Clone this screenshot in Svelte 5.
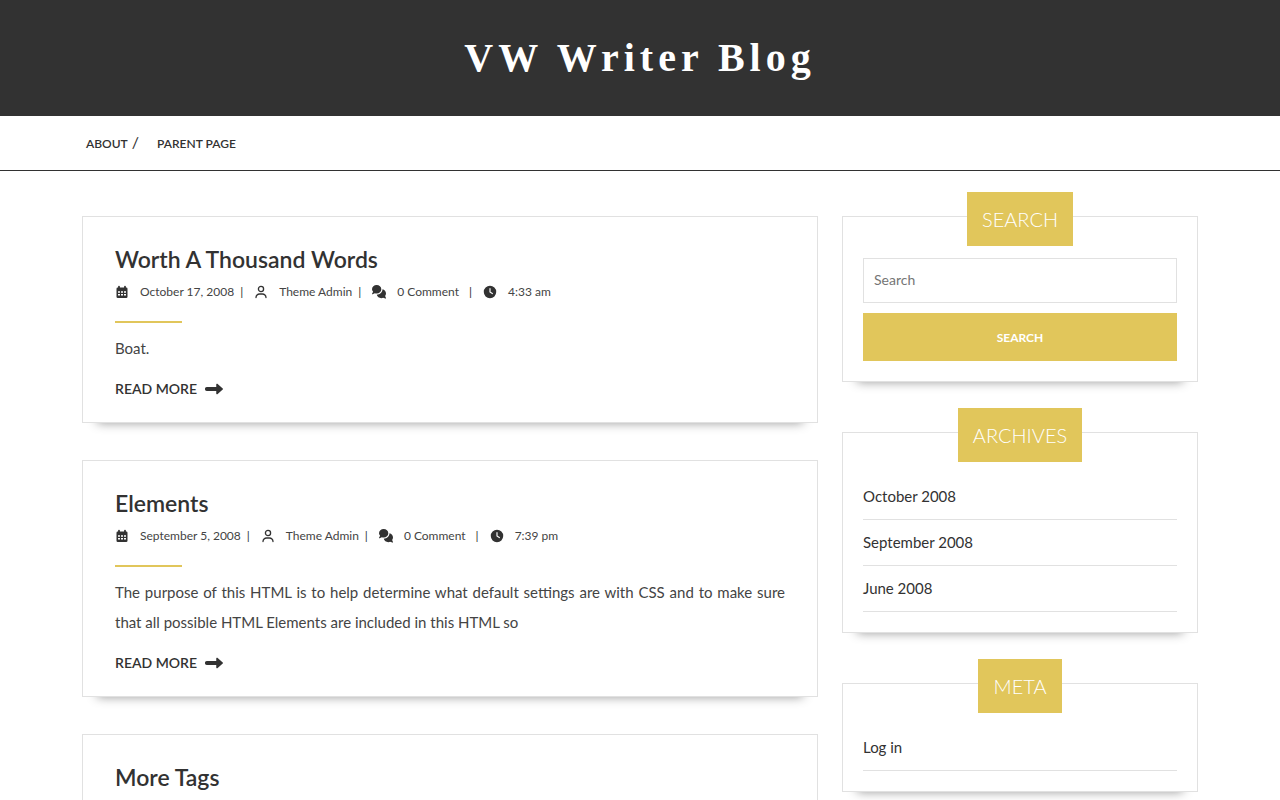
<script>
  const pages = ['About', 'Parent Page'];
  const posts = [
    { title: 'Worth A Thousand Words', date: 'October 17, 2008', time: '4:33 am', text: 'Boat.' },
    {
      title: 'Elements',
      date: 'September 5, 2008',
      time: '7:39 pm',
      text: 'The purpose of this HTML is to help determine what default settings are with CSS and to make sure that all possible HTML Elements are included in this HTML so'
    },
    { title: 'More Tags', date: '', time: '', text: '' }
  ];
  const lists = [
    { title: 'Archives', items: ['October 2008', 'September 2008', 'June 2008'] },
    { title: 'Meta', items: ['Log in'] }
  ];
</script>

<header>
  <h1><a href="#home">VW Writer Blog</a></h1>
</header>

<nav aria-label="Pages">
  <ul class="container menu">
    {#each pages as page}
      <li><a href="#page">{page}</a></li>
    {/each}
  </ul>
</nav>

<div class="container columns">
  <main>
    {#each posts as post}
      <article class="card">
        <h2><a href="#post">{post.title}</a></h2>
        {#if post.text}
          <div class="meta">
            <span class="item">
              <svg viewBox="0 0 14 14" aria-hidden="true">
                <path fill-rule="evenodd" d="M4 .8a.9.9 0 0 1 .9.9V2.400h4.200V1.700a.9.9 0 0 1 1.800 0v.7h.3A1.300 1.300 0 0 1 12.500 3.700v8A1.300 1.300 0 0 1 11.200 13H2.800A1.300 1.300 0 0 1 1.500 11.700V3.700A1.300 1.300 0 0 1 2.800 2.400H3.100V1.700A.9.9 0 0 1 4 .8zM3 6.200v1.600h2V6.200zM6 6.200v1.600h2V6.200zM9 6.200v1.600h2V6.200zM3 9v1.600h2V9zM6 9v1.600h2V9zM9 9v1.600h2V9z" />
              </svg>
              <a href="#date">{post.date}</a>
            </span>
            <span class="bar">|</span>
            <span class="item">
              <svg viewBox="0 0 14 14" aria-hidden="true">
                <g fill="none" stroke="currentColor" stroke-width="1.3" stroke-linecap="round">
                  <circle cx="7" cy="4" r="2.6" />
                  <path d="M2 12.600A3.600 3.600 0 0 1 5.600 9H8.400A3.600 3.600 0 0 1 12 12.600" />
                </g>
              </svg>
              <a href="#author">Theme Admin</a>
            </span>
            <span class="bar">|</span>
            <span class="item">
              <svg viewBox="0 0 576 512" aria-hidden="true">
                <path d="M384 144c0 97-86 176-192 176-27 0-52-5-75-14L25 351c-8 4-17 2-22-4s-6-15-2-23l45-80C17 216 0 182 0 144 0 47 86-32 192-32s192 79 192 176zM384 512c-93 0-170-60-188-139C326 371 431 270 432 147 514 167 576 237 576 320c0 38-13 73-36 101l35 80c3 8 2 17-4 23s-15 8-22 4l-91-31c-23 10-48 15-74 15z" />
              </svg>
              <span>0 Comment</span>
            </span>
            <span class="bar wide">|</span>
            <span class="item">
              <svg viewBox="0 0 576 576" aria-hidden="true">
                <path transform="translate(32 32)" fill-rule="evenodd" d="M256 0a256 256 0 1 1 0 512A256 256 0 1 1 256 0zM232 120V256c0 8 4 15.500 10.700 20l96 64c11 7.400 25.900 4.400 33.300-6.700s4.400-25.900-6.700-33.300L280 243.200V120c0-13.300-10.700-24-24-24s-24 10.700-24 24z" />
              </svg>
              <span>{post.time}</span>
            </span>
          </div>
          <hr />
          <p>{post.text}</p>
          <a class="more" href="#post">
            Read More
            <svg viewBox="0 96 512 320" aria-hidden="true">
              <path d="M334.500 404c8.800 3.800 19 2 26-4.600l144-126c4.800-4.500 7.500-10.800 7.500-17.400s-2.700-12.900-7.500-17.400l-144-126c-7-6.600-17.200-8.400-26-4.600s-14.500 12.500-14.500 22v68H50c-28 0-50 20-50 48v20c0 28 22 48 50 48h270v68c0 9.600 5.700 18.200 14.500 22z" />
            </svg>
          </a>
        {/if}
      </article>
    {/each}
  </main>

  <aside>
    <section class="card widget">
      <h3>Search</h3>
      <form role="search">
        <input type="search" aria-label="Search" placeholder="Search" />
        <button type="submit">Search</button>
      </form>
    </section>
    {#each lists as list}
      <section class="card widget">
        <h3>{list.title}</h3>
        <ul>
          {#each list.items as item}
            <li><a href="#list">{item}</a></li>
          {/each}
        </ul>
      </section>
    {/each}
  </aside>
</div>

<style>
  :global(body) {
    font-family: Lato, sans-serif;
    font-size: 15px;
    color: #323232;
    background: #fff;
  }
  :global(*) {
    box-sizing: border-box;
  }
  a {
    color: inherit;
    text-decoration: none;
  }
  ul {
    list-style: none;
    margin: 0;
    padding: 0;
  }
  header {
    background: #323232;
    padding: 34px 12px;
    text-align: center;
  }
  h1 {
    margin: 0;
    font: bold 40px/48px "Liberation Serif", serif;
    letter-spacing: 5px;
    color: #fff;
  }
  .container {
    width: 100%;
    max-width: 1140px;
    margin: 0 auto;
    padding: 0 12px;
  }
  nav {
    border-bottom: 1px solid #323232;
  }
  .menu {
    display: flex;
    padding: 0 16px;
  }
  nav li {
    display: flex;
    align-items: center;
    height: 54px;
  }
  nav a {
    font-size: 12px;
    font-weight: 600;
    text-transform: uppercase;
  }
  nav li:not(:last-child)::after {
    content: "/";
    font-size: 16px;
    line-height: 20px;
    padding: 0 18px 2px 4px;
  }
  .columns {
    display: flex;
    gap: 24px;
    padding-top: 45px;
    align-items: flex-start;
  }
  main {
    flex: 0 0 calc(66.6667% - 8px);
    min-width: 0;
  }
  aside {
    flex: 1;
    min-width: 0;
  }
  .card {
    background: #fff;
    border: 1px solid #e1e1e1;
    box-shadow: 0 15px 10px -15px #999;
  }
  article {
    padding: 24px 32px 17px;
    margin-bottom: 37px;
  }
  h2 {
    margin: 0;
    font-size: 23px;
    font-weight: 600;
    line-height: 36px;
  }
  .meta {
    display: flex;
    align-items: center;
    font-size: 12px;
    line-height: 30px;
  }
  .item {
    display: flex;
    align-items: center;
    gap: 11px;
  }
  .item a,
  .item span,
  p {
    color: #444;
  }
  .bar {
    padding: 0 11px 0 6px;
  }
  .bar.wide {
    padding-left: 10px;
  }
  svg {
    width: 14px;
    height: 14px;
    fill: currentColor;
    overflow: visible;
  }
  hr {
    width: 67px;
    height: 2px;
    margin: 14px 0 10px;
    border: 0;
    background: #e1c65b;
  }
  p {
    margin: 0;
    line-height: 30px;
    text-align: justify;
  }
  .more {
    display: flex;
    align-items: center;
    gap: 8px;
    margin-top: 10px;
    font-size: 14px;
    line-height: 32px;
    font-weight: 600;
    text-transform: uppercase;
  }
  .more svg {
    width: 18px;
    height: 12px;
  }
  .widget {
    display: flex;
    flex-direction: column;
    padding: 0 20px 20px;
    margin-bottom: 50px;
  }
  h3 {
    align-self: center;
    margin: -25px 0 12px;
    padding: 0 15px;
    font-size: 20px;
    font-weight: 300;
    line-height: 54px;
    text-transform: uppercase;
    color: #fff;
    background: #e1c65b;
  }
  form {
    display: flex;
    flex-direction: column;
    gap: 10px;
  }
  input {
    height: 45px;
    padding: 0 10px 2px;
    border: 1px solid #e1e1e1;
    font: 14px Lato, sans-serif;
    appearance: none;
  }
  input::placeholder {
    color: #757575;
  }
  button {
    height: 48px;
    border: 0;
    font: 700 12px Lato, sans-serif;
    text-transform: uppercase;
    color: #fff;
    background: #e1c65b;
  }
  .widget li {
    line-height: 45px;
    border-bottom: 1px solid #e1e1e1;
  }
</style>
